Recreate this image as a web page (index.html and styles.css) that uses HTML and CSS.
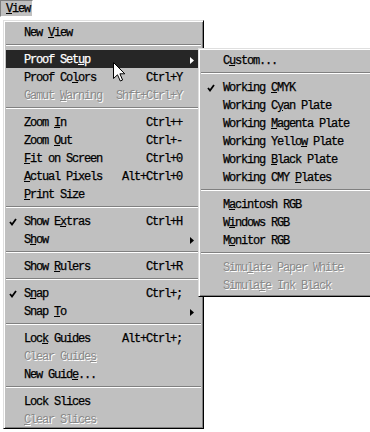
FILE: index.html
```html
<!DOCTYPE html>
<html>
<head>
	<title>View menu</title>
	<link rel="stylesheet" href="styles.css">
</head>
<body>
<div class="screen">
	<div class="menubar">
		<span class="menubar-item"><u>V</u>iew</span>
	</div>

	<div class="menu main">
		<ul class="list">
			<li class="item"><span class="check"></span><span class="label">New <u>V</u>iew</span></li>
			<li class="sep"></li>
			<li class="item focus"><span class="check"></span><span class="label">Proof Set<u>u</u>p</span><span class="keys"></span><span class="arrow"><svg width="4" height="7" viewBox="0 0 4 7"><polygon points="0,0 4,3.5 0,7"/></svg></span></li>
			<li class="item"><span class="check"></span><span class="label">Proof Co<u>l</u>ors</span><span class="keys">Ctrl+Y</span></li>
			<li class="item off"><span class="check"></span><span class="label">Gamut <u>W</u>arning</span><span class="keys">Shft+Ctrl+Y</span></li>
			<li class="sep"></li>
			<li class="item"><span class="check"></span><span class="label">Zoom <u>I</u>n</span><span class="keys">Ctrl++</span></li>
			<li class="item"><span class="check"></span><span class="label">Zoom <u>O</u>ut</span><span class="keys">Ctrl+-</span></li>
			<li class="item"><span class="check"></span><span class="label"><u>F</u>it on Screen</span><span class="keys">Ctrl+0</span></li>
			<li class="item"><span class="check"></span><span class="label"><u>A</u>ctual Pixels</span><span class="keys">Alt+Ctrl+0</span></li>
			<li class="item"><span class="check"></span><span class="label"><u>P</u>rint Size</span></li>
			<li class="sep"></li>
			<li class="item"><span class="check"><svg width="8" height="8" viewBox="0 0 8 8"><polyline points="1,4 3,6.5 7,1"/></svg></span><span class="label">Show E<u>x</u>tras</span><span class="keys">Ctrl+H</span></li>
			<li class="item"><span class="check"></span><span class="label">S<u>h</u>ow</span><span class="keys"></span><span class="arrow"><svg width="4" height="7" viewBox="0 0 4 7"><polygon points="0,0 4,3.5 0,7"/></svg></span></li>
			<li class="sep"></li>
			<li class="item"><span class="check"></span><span class="label">Show <u>R</u>ulers</span><span class="keys">Ctrl+R</span></li>
			<li class="sep"></li>
			<li class="item"><span class="check"><svg width="8" height="8" viewBox="0 0 8 8"><polyline points="1,4 3,6.5 7,1"/></svg></span><span class="label">S<u>n</u>ap</span><span class="keys">Ctrl+;</span></li>
			<li class="item"><span class="check"></span><span class="label">Snap <u>T</u>o</span><span class="keys"></span><span class="arrow"><svg width="4" height="7" viewBox="0 0 4 7"><polygon points="0,0 4,3.5 0,7"/></svg></span></li>
			<li class="sep"></li>
			<li class="item"><span class="check"></span><span class="label">Loc<u>k</u> Guides</span><span class="keys">Alt+Ctrl+;</span></li>
			<li class="item off"><span class="check"></span><span class="label">Clear Guide<u>s</u></span></li>
			<li class="item"><span class="check"></span><span class="label">New Guid<u>e</u>...</span></li>
			<li class="sep"></li>
			<li class="item"><span class="check"></span><span class="label">Lock Slices</span></li>
			<li class="item off"><span class="check"></span><span class="label"><u>C</u>lear Slices</span></li>
		</ul>

		<!-- Proof Setup submenu -->
		<div class="menu sub">
			<ul class="list">
				<li class="item"><span class="check"></span><span class="label">C<u>u</u>stom...</span></li>
				<li class="sep"></li>
				<li class="item"><span class="check"><svg width="8" height="8" viewBox="0 0 8 8"><polyline points="1,4 3,6.5 7,1"/></svg></span><span class="label">Working <u>C</u>MYK</span></li>
				<li class="item"><span class="check"></span><span class="label">Working C<u>y</u>an Plate</span></li>
				<li class="item"><span class="check"></span><span class="label">Working <u>M</u>agenta Plate</span></li>
				<li class="item"><span class="check"></span><span class="label">Working Yello<u>w</u> Plate</span></li>
				<li class="item"><span class="check"></span><span class="label">Working <u>B</u>lack Plate</span></li>
				<li class="item"><span class="check"></span><span class="label">Working CMY <u>P</u>lates</span></li>
				<li class="sep"></li>
				<li class="item"><span class="check"></span><span class="label">M<u>a</u>cintosh RGB</span></li>
				<li class="item"><span class="check"></span><span class="label">W<u>i</u>ndows RGB</span></li>
				<li class="item"><span class="check"></span><span class="label">M<u>o</u>nitor RGB</span></li>
				<li class="sep"></li>
				<li class="item off"><span class="check"></span><span class="label">Simu<u>l</u>ate Paper White</span></li>
				<li class="item off"><span class="check"></span><span class="label">Simula<u>t</u>e Ink Black</span></li>
			</ul>
		</div>
	</div>

	<svg class="cursor" width="13" height="20" viewBox="0 0 13 20">
		<path d="M0.5 0.5 L0.5 16.5 L4.5 12.8 L7.3 19 L9.6 18 L6.9 11.8 L11.8 11.8 Z"/>
	</svg>
</div>
</body>
</html>
```

FILE: styles.css
```css
*{margin: 0;padding: 0;}
ul{list-style: none;}
body{background: #fff; overflow: hidden;}

.screen{
	position: relative;
	width: 370px;
	height: 432px;
	overflow: hidden;
	font-family: "Liberation Mono", "Courier New", monospace;
	font-size: 12px;
	letter-spacing: -1.2px;
	-webkit-text-stroke: 0.25px currentColor;
	color: #000;
}

/* menu bar */
.menubar{height: 18px; display: flex;}
.menubar-item{
	width: 33px;
	height: 17px;
	line-height: 16px;
	padding-left: 5px;
	box-sizing: border-box;
	background: #c0c0c0;
	border-top: 1px solid #808080;
	border-left: 1px solid #808080;
	border-right: 1px solid #fff;
	border-bottom: 1px solid #fff;
}

/* win98 style popup */
.menu{
	background: #c0c0c0;
	border: 1px solid;
	border-color: #dfdfdf #000 #000 #dfdfdf;
	box-shadow: inset 1px 1px 0 #fff, inset -1px -1px 0 #808080;
	padding: 2px;
	box-sizing: border-box;
}
.main{
	position: relative;
	width: 201px;
	margin: 2px 0 0 3px;
	padding-bottom: 0;
}
.sub{
	position: absolute;
	left: 194px;
	top: 27px;
	width: 200px;
}

.list .item{
	display: grid;
	grid-template-columns: 18px 1fr auto 19px;
	align-items: center;
	height: 18px;
	padding-top: 2px;
	line-height: 16px;
	box-sizing: border-box;
	white-space: nowrap;
}
.sub .list .item{grid-template-columns: 22px 1fr;}

.list .item u{text-underline-offset: 1px;}

.item .check{display: flex; align-items: center; padding-left: 3px;}
.sub .item .check{padding-left: 6px;}
.item .check svg{fill: none; stroke: #000; stroke-width: 1.8;}

.item .keys{text-align: right;}
.item .arrow{display: flex; align-items: center; justify-content: center;}
.item .arrow svg{fill: #000;}

.item.focus{background: #262626; color: #fff;}
.item.focus .arrow svg{fill: #fff;}

.item.off{color: #8a8a8a; text-shadow: 1px 1px 0 #fff; -webkit-text-stroke: 0;}

.list .sep{
	height: 0;
	margin: 3px 0 4px;
	border-top: 1px solid #808080;
	border-bottom: 1px solid #fff;
}

.cursor{position: absolute; left: 113px; top: 62px;}
.cursor path{fill: #fff; stroke: #000; stroke-width: 1; stroke-linejoin: miter;}
```
